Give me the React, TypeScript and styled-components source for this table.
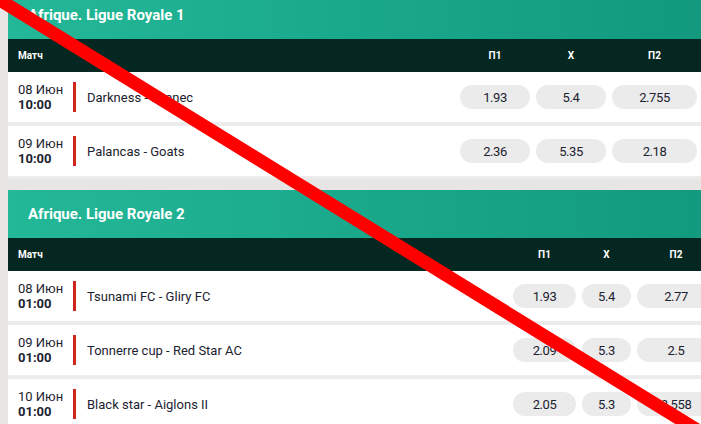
import React from "react";
import styled, { createGlobalStyle } from "styled-components";

const GlobalStyle = createGlobalStyle`
  html, body {
    margin: 0;
    padding: 0;
    background: #e8e5e5;
    overflow: hidden;
    font-family: Roboto, "Liberation Sans", Arial, sans-serif;
  }
`;

const Page = styled.div`
  padding-left: 8px;
  margin-top: -9px;
  display: flex;
  flex-direction: column;
  gap: 11px;
`;

const Panel = styled.section<{ $width: number }>`
  width: ${(p) => p.$width}px;
  background: #ececec;
  display: flex;
  flex-direction: column;
  padding-bottom: 3px;
`;

const Body = styled.div`
  display: flex;
  flex-direction: column;
  gap: 4px;
`;

const Title = styled.h2`
  margin: 0;
  height: 48px;
  display: flex;
  align-items: center;
  padding-left: 20px;
  background: linear-gradient(90deg, #23b898 0%, #1aa88b 50%, #12997e 100%);
  color: #fff;
  font-size: 15px;
  font-weight: 700;
`;

const Grid = styled.div<{ $cols: string }>`
  display: grid;
  grid-template-columns: ${(p) => p.$cols};
  column-gap: 6px;
  padding-right: 4px;
  align-items: center;
`;

const ColHeader = styled(Grid)`
  height: 33px;
  background: #052721;
  color: #fff;
  font-size: 10px;
  font-weight: 700;
`;

const ColLabel = styled.div<{ $left?: boolean }>`
  text-align: ${(p) => (p.$left ? "left" : "center")};
  padding-left: ${(p) => (p.$left ? "10px" : "0")};
`;

const Row = styled(Grid)`
  height: 50px;
  background: #fff;
`;

const MatchCell = styled.div`
  display: flex;
  align-items: center;
  padding-left: 10px;
`;

const When = styled.div`
  width: 55px;
  display: flex;
  flex-direction: column;
  color: #1c2230;
  font-size: 13px;
  line-height: 15px;
`;

const Time = styled.span`
  font-weight: 700;
`;

const Bar = styled.span`
  width: 3px;
  height: 30px;
  background: #d1261b;
  margin-right: 11px;
`;

const Teams = styled.span`
  color: #1c2230;
  font-size: 13px;
`;

const Odd = styled.button`
  height: 24px;
  border: none;
  border-radius: 12px;
  background: #ebebeb;
  color: #1c2230;
  font-family: inherit;
  font-size: 13px;
  letter-spacing: -0.4px;
  padding: 0;
  cursor: pointer;
`;

const Strike = styled.svg`
  position: fixed;
  left: 0;
  top: 0;
  width: 701px;
  height: 424px;
  pointer-events: none;
`;

type Match = { date: string; time: string; teams: string; odds: string[] };
type League = { title: string; width: number; cols: string; matches: Match[] };

const leagues: League[] = [
  {
    title: "Afrique. Ligue Royale 1",
    width: 693,
    cols: "1fr 70px 70px 85px",
    matches: [
      { date: "08 Июн", time: "10:00", teams: "Darkness - Fennec", odds: ["1.93", "5.4", "2.755"] },
      { date: "09 Июн", time: "10:00", teams: "Palancas - Goats", odds: ["2.36", "5.35", "2.18"] },
    ],
  },
  {
    title: "Afrique. Ligue Royale 2",
    width: 711,
    cols: "1fr 63px 49px 78px",
    matches: [
      { date: "08 Июн", time: "01:00", teams: "Tsunami FC - Gliry FC", odds: ["1.93", "5.4", "2.77"] },
      { date: "09 Июн", time: "01:00", teams: "Tonnerre cup - Red Star AC", odds: ["2.09", "5.3", "2.5"] },
      { date: "10 Июн", time: "01:00", teams: "Black star - Aiglons II", odds: ["2.05", "5.3", "2.558"] },
    ],
  },
];

export default function App() {
  return (
    <>
      <GlobalStyle />
      <Page>
        {leagues.map((l) => (
          <Panel key={l.title} $width={l.width}>
            <Title>{l.title}</Title>
            <ColHeader $cols={l.cols}>
              <ColLabel $left>Матч</ColLabel>
              <ColLabel>П1</ColLabel>
              <ColLabel>X</ColLabel>
              <ColLabel>П2</ColLabel>
            </ColHeader>
            <Body>
              {l.matches.map((m) => (
                <Row key={m.teams} $cols={l.cols}>
                  <MatchCell>
                    <When>
                      <span>{m.date}</span>
                      <Time>{m.time}</Time>
                    </When>
                    <Bar />
                    <Teams>{m.teams}</Teams>
                  </MatchCell>
                  {m.odds.map((o, i) => (
                    <Odd key={i}>{o}</Odd>
                  ))}
                </Row>
              ))}
            </Body>
          </Panel>
        ))}
      </Page>
      <Strike viewBox="0 0 701 424">
        <line x1="-10" y1="-6" x2="712" y2="439" stroke="#ff0000" strokeWidth="13" />
      </Strike>
    </>
  );
}
